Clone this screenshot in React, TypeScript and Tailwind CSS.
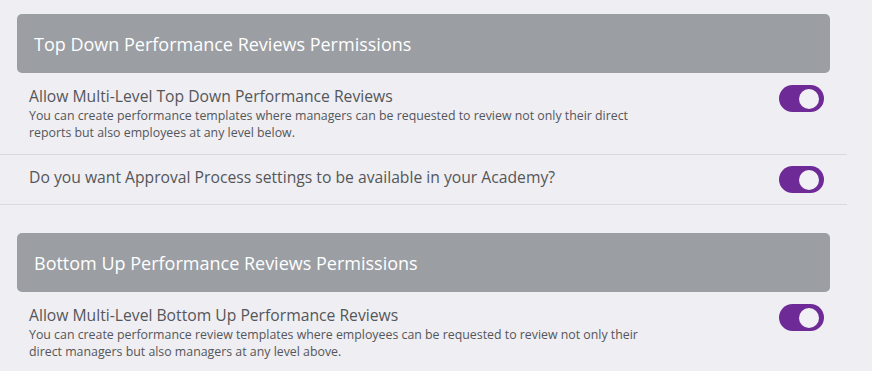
import React from "react";

function Toggle() {
  return (
    <div className="flex h-[27px] w-[45px] shrink-0 items-center justify-end rounded-full bg-[#6e2a96] pr-[5px]">
      <div className="h-[20px] w-[20px] rounded-full bg-[#f1f1f5]" />
    </div>
  );
}

function Header({ title }: { title: string }) {
  return (
    <div className="mx-[17px] flex h-[59px] items-center rounded-[5px] bg-[#9b9ea3] pl-[17px]">
      <span className="text-[18px] leading-[24px] text-white">{title}</span>
    </div>
  );
}

function Row({
  title,
  desc,
  border = true,
  pt = "pt-[12px]",
  pb = "pb-[13px]",
}: {
  title: string;
  desc?: string[];
  border?: boolean;
  pt?: string;
  pb?: string;
}) {
  return (
    <div
      className={`flex items-start justify-between pl-[29px] pr-[23px] ${pt} ${pb} ${
        border ? "border-b border-[#d9dade]" : ""
      }`}
    >
      <div className="flex flex-col">
        <div className="text-[15.7px] leading-[22px] text-[#555659]">{title}</div>
        {desc && (
          <div className="text-[12.35px] leading-[17px] text-[#555659]">
            {desc.map((d, i) => (
              <div key={i}>{d}</div>
            ))}
          </div>
        )}
      </div>
      <Toggle />
    </div>
  );
}

export default function App() {
  return (
    <div
      className="h-[371px] w-[872px] overflow-hidden bg-[#eeeef3] pt-[14px]"
      style={{ fontFamily: '"Open Sans", "Noto Sans", sans-serif' }}
    >
      <div className="w-[847px]">
        <Header title="Top Down Performance Reviews Permissions" />
        <Row
          title="Allow Multi-Level Top Down Performance Reviews"
          desc={[
            "You can create performance templates where managers can be requested to review not only their direct",
            "reports but also employees at any level below.",
          ]}
        />
        <Row
          title="Do you want Approval Process settings to be available in your Academy?"
          pt="pt-[11px]"
          pb="pb-[11px]"
        />
        <div className="h-[28px]" />
        <Header title="Bottom Up Performance Reviews Permissions" />
        <Row
          title="Allow Multi-Level Bottom Up Performance Reviews"
          desc={[
            "You can create performance review templates where employees can be requested to review not only their",
            "direct managers but also managers at any level above.",
          ]}
          border={false}
        />
      </div>
    </div>
  );
}
